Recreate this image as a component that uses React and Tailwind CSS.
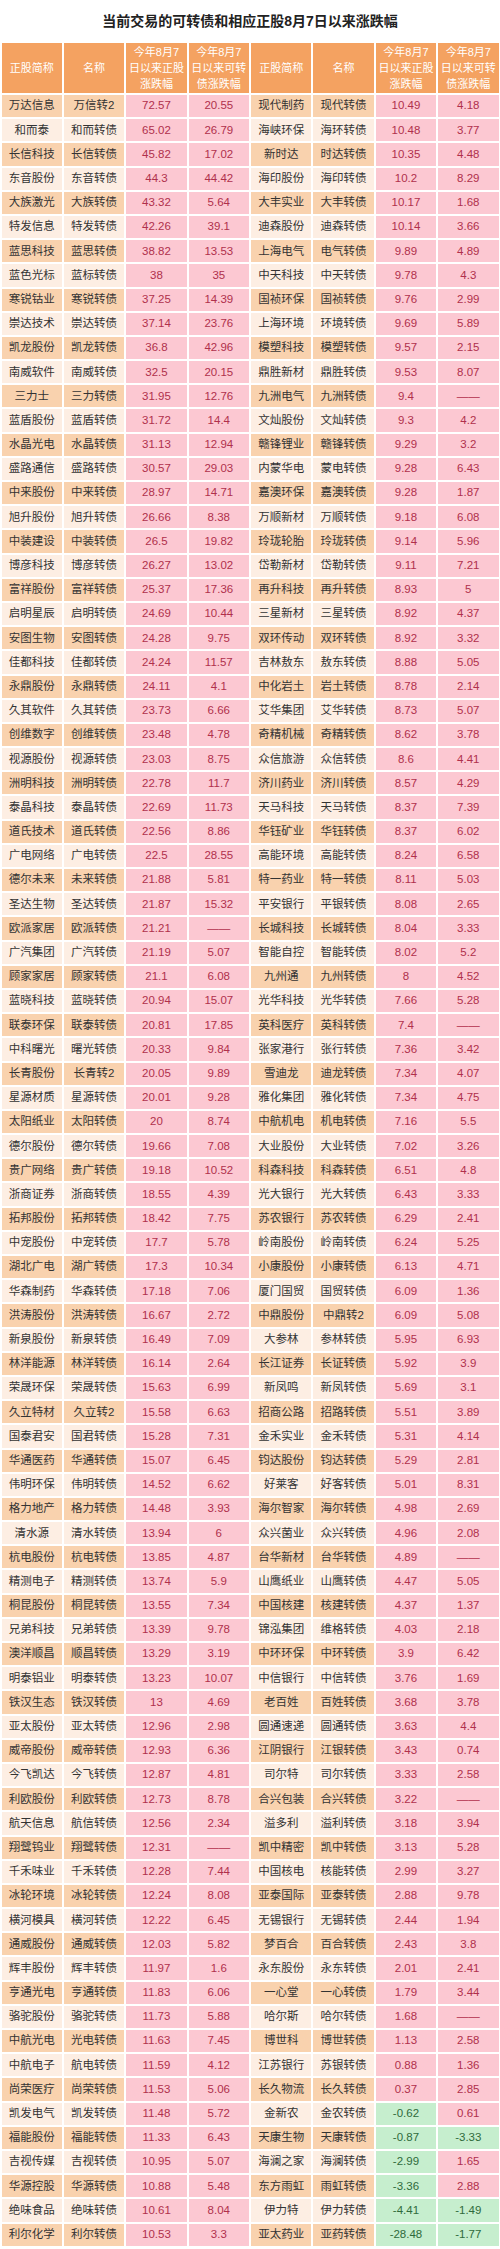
import React from 'react';

const rows = [
  ['万达信息', '万信转2', '72.57', '20.55', '现代制药', '现代转债', '10.49', '4.18'],
  ['和而泰', '和而转债', '65.02', '26.79', '海峡环保', '海环转债', '10.48', '3.77'],
  ['长信科技', '长信转债', '45.82', '17.02', '新时达', '时达转债', '10.35', '4.48'],
  ['东音股份', '东音转债', '44.3', '44.42', '海印股份', '海印转债', '10.2', '8.29'],
  ['大族激光', '大族转债', '43.32', '5.64', '大丰实业', '大丰转债', '10.17', '1.68'],
  ['特发信息', '特发转债', '42.26', '39.1', '迪森股份', '迪森转债', '10.14', '3.66'],
  ['蓝思科技', '蓝思转债', '38.82', '13.53', '上海电气', '电气转债', '9.89', '4.89'],
  ['蓝色光标', '蓝标转债', '38', '35', '中天科技', '中天转债', '9.78', '4.3'],
  ['寒锐钴业', '寒锐转债', '37.25', '14.39', '国祯环保', '国祯转债', '9.76', '2.99'],
  ['崇达技术', '崇达转债', '37.14', '23.76', '上海环境', '环境转债', '9.69', '5.89'],
  ['凯龙股份', '凯龙转债', '36.8', '42.96', '模塑科技', '模塑转债', '9.57', '2.15'],
  ['南威软件', '南威转债', '32.5', '20.15', '鼎胜新材', '鼎胜转债', '9.53', '8.07'],
  ['三力士', '三力转债', '31.95', '12.76', '九洲电气', '九洲转债', '9.4', '——'],
  ['蓝盾股份', '蓝盾转债', '31.72', '14.4', '文灿股份', '文灿转债', '9.3', '4.2'],
  ['水晶光电', '水晶转债', '31.13', '12.94', '赣锋锂业', '赣锋转债', '9.29', '3.2'],
  ['盛路通信', '盛路转债', '30.57', '29.03', '内蒙华电', '蒙电转债', '9.28', '6.43'],
  ['中来股份', '中来转债', '28.97', '14.71', '嘉澳环保', '嘉澳转债', '9.28', '1.87'],
  ['旭升股份', '旭升转债', '26.66', '8.38', '万顺新材', '万顺转债', '9.18', '6.08'],
  ['中装建设', '中装转债', '26.5', '19.82', '玲珑轮胎', '玲珑转债', '9.14', '5.96'],
  ['博彦科技', '博彦转债', '26.27', '13.02', '岱勒新材', '岱勒转债', '9.11', '7.21'],
  ['富祥股份', '富祥转债', '25.37', '17.36', '再升科技', '再升转债', '8.93', '5'],
  ['启明星辰', '启明转债', '24.69', '10.44', '三星新材', '三星转债', '8.92', '4.37'],
  ['安图生物', '安图转债', '24.28', '9.75', '双环传动', '双环转债', '8.92', '3.32'],
  ['佳都科技', '佳都转债', '24.24', '11.57', '吉林敖东', '敖东转债', '8.88', '5.05'],
  ['永鼎股份', '永鼎转债', '24.11', '4.1', '中化岩土', '岩土转债', '8.78', '2.14'],
  ['久其软件', '久其转债', '23.73', '6.66', '艾华集团', '艾华转债', '8.73', '5.07'],
  ['创维数字', '创维转债', '23.48', '4.78', '奇精机械', '奇精转债', '8.62', '3.78'],
  ['视源股份', '视源转债', '23.03', '8.75', '众信旅游', '众信转债', '8.6', '4.41'],
  ['洲明科技', '洲明转债', '22.78', '11.7', '济川药业', '济川转债', '8.57', '4.29'],
  ['泰晶科技', '泰晶转债', '22.69', '11.73', '天马科技', '天马转债', '8.37', '7.39'],
  ['道氏技术', '道氏转债', '22.56', '8.86', '华钰矿业', '华钰转债', '8.37', '6.02'],
  ['广电网络', '广电转债', '22.5', '28.55', '高能环境', '高能转债', '8.24', '6.58'],
  ['德尔未来', '未来转债', '21.88', '5.81', '特一药业', '特一转债', '8.11', '5.03'],
  ['圣达生物', '圣达转债', '21.87', '15.32', '平安银行', '平银转债', '8.08', '2.65'],
  ['欧派家居', '欧派转债', '21.21', '——', '长城科技', '长城转债', '8.04', '3.33'],
  ['广汽集团', '广汽转债', '21.19', '5.07', '智能自控', '智能转债', '8.02', '5.2'],
  ['顾家家居', '顾家转债', '21.1', '6.08', '九州通', '九州转债', '8', '4.52'],
  ['蓝晓科技', '蓝晓转债', '20.94', '15.07', '光华科技', '光华转债', '7.66', '5.28'],
  ['联泰环保', '联泰转债', '20.81', '17.85', '英科医疗', '英科转债', '7.4', '——'],
  ['中科曙光', '曙光转债', '20.33', '9.84', '张家港行', '张行转债', '7.36', '3.42'],
  ['长青股份', '长青转2', '20.05', '9.89', '雪迪龙', '迪龙转债', '7.34', '4.07'],
  ['星源材质', '星源转债', '20.01', '9.28', '雅化集团', '雅化转债', '7.34', '4.75'],
  ['太阳纸业', '太阳转债', '20', '8.74', '中航机电', '机电转债', '7.16', '5.5'],
  ['德尔股份', '德尔转债', '19.66', '7.08', '大业股份', '大业转债', '7.02', '3.26'],
  ['贵广网络', '贵广转债', '19.18', '10.52', '科森科技', '科森转债', '6.51', '4.8'],
  ['浙商证券', '浙商转债', '18.55', '4.39', '光大银行', '光大转债', '6.43', '3.33'],
  ['拓邦股份', '拓邦转债', '18.42', '7.75', '苏农银行', '苏农转债', '6.29', '2.41'],
  ['中宠股份', '中宠转债', '17.7', '5.78', '岭南股份', '岭南转债', '6.24', '5.25'],
  ['湖北广电', '湖广转债', '17.3', '10.34', '小康股份', '小康转债', '6.13', '4.71'],
  ['华森制药', '华森转债', '17.18', '7.06', '厦门国贸', '国贸转债', '6.09', '1.36'],
  ['洪涛股份', '洪涛转债', '16.67', '2.72', '中鼎股份', '中鼎转2', '6.09', '5.08'],
  ['新泉股份', '新泉转债', '16.49', '7.09', '大参林', '参林转债', '5.95', '6.93'],
  ['林洋能源', '林洋转债', '16.14', '2.64', '长江证券', '长证转债', '5.92', '3.9'],
  ['荣晟环保', '荣晟转债', '15.63', '6.99', '新凤鸣', '新凤转债', '5.69', '3.1'],
  ['久立特材', '久立转2', '15.58', '6.63', '招商公路', '招路转债', '5.51', '3.89'],
  ['国泰君安', '国君转债', '15.28', '7.31', '金禾实业', '金禾转债', '5.31', '4.14'],
  ['华通医药', '华通转债', '15.07', '6.45', '钧达股份', '钧达转债', '5.29', '2.81'],
  ['伟明环保', '伟明转债', '14.52', '6.62', '好莱客', '好客转债', '5.01', '8.31'],
  ['格力地产', '格力转债', '14.48', '3.93', '海尔智家', '海尔转债', '4.98', '2.69'],
  ['清水源', '清水转债', '13.94', '6', '众兴菌业', '众兴转债', '4.96', '2.08'],
  ['杭电股份', '杭电转债', '13.85', '4.87', '台华新材', '台华转债', '4.89', '——'],
  ['精测电子', '精测转债', '13.74', '5.9', '山鹰纸业', '山鹰转债', '4.47', '5.05'],
  ['桐昆股份', '桐昆转债', '13.55', '7.34', '中国核建', '核建转债', '4.37', '1.37'],
  ['兄弟科技', '兄弟转债', '13.39', '9.78', '锦泓集团', '维格转债', '4.03', '2.18'],
  ['澳洋顺昌', '顺昌转债', '13.29', '3.19', '中环环保', '中环转债', '3.9', '6.42'],
  ['明泰铝业', '明泰转债', '13.23', '10.07', '中信银行', '中信转债', '3.76', '1.69'],
  ['铁汉生态', '铁汉转债', '13', '4.69', '老百姓', '百姓转债', '3.68', '3.78'],
  ['亚太股份', '亚太转债', '12.96', '2.98', '圆通速递', '圆通转债', '3.63', '4.4'],
  ['威帝股份', '威帝转债', '12.93', '6.36', '江阴银行', '江银转债', '3.43', '0.74'],
  ['今飞凯达', '今飞转债', '12.87', '4.81', '司尔特', '司尔转债', '3.33', '2.58'],
  ['利欧股份', '利欧转债', '12.73', '8.78', '合兴包装', '合兴转债', '3.22', '——'],
  ['航天信息', '航信转债', '12.56', '2.34', '溢多利', '溢利转债', '3.18', '3.94'],
  ['翔鹭钨业', '翔鹭转债', '12.31', '——', '凯中精密', '凯中转债', '3.13', '5.28'],
  ['千禾味业', '千禾转债', '12.28', '7.44', '中国核电', '核能转债', '2.99', '3.27'],
  ['冰轮环境', '冰轮转债', '12.24', '8.08', '亚泰国际', '亚泰转债', '2.88', '9.78'],
  ['横河模具', '横河转债', '12.22', '6.45', '无锡银行', '无锡转债', '2.44', '1.94'],
  ['通威股份', '通威转债', '12.03', '5.82', '梦百合', '百合转债', '2.43', '3.8'],
  ['辉丰股份', '辉丰转债', '11.97', '1.6', '永东股份', '永东转债', '2.01', '2.41'],
  ['亨通光电', '亨通转债', '11.83', '6.06', '一心堂', '一心转债', '1.79', '3.44'],
  ['骆驼股份', '骆驼转债', '11.73', '5.88', '哈尔斯', '哈尔转债', '1.68', '——'],
  ['中航光电', '光电转债', '11.63', '7.45', '博世科', '博世转债', '1.13', '2.58'],
  ['中航电子', '航电转债', '11.59', '4.12', '江苏银行', '苏银转债', '0.88', '1.36'],
  ['尚荣医疗', '尚荣转债', '11.53', '5.06', '长久物流', '长久转债', '0.37', '2.85'],
  ['凯发电气', '凯发转债', '11.48', '5.72', '金新农', '金农转债', '-0.62', '0.61'],
  ['福能股份', '福能转债', '11.33', '6.43', '天康生物', '天康转债', '-0.87', '-3.33'],
  ['吉视传媒', '吉视转债', '10.95', '5.07', '海澜之家', '海澜转债', '-2.99', '1.65'],
  ['华源控股', '华源转债', '10.88', '5.48', '东方雨虹', '雨虹转债', '-3.36', '2.88'],
  ['绝味食品', '绝味转债', '10.61', '8.04', '伊力特', '伊力转债', '-4.41', '-1.49'],
  ['利尔化学', '利尔转债', '10.53', '3.3', '亚太药业', '亚药转债', '-28.48', '-1.77'],
];

const headers = [
  ['正股简称'],
  ['名称'],
  ['今年8月7', '日以来正股', '涨跌幅'],
  ['今年8月7', '日以来可转', '债涨跌幅'],
  ['正股简称'],
  ['名称'],
  ['今年8月7', '日以来正股', '涨跌幅'],
  ['今年8月7', '日以来可转', '债涨跌幅'],
];

function NameCell({ text, odd }) {
  return (
    <div
      className={`flex items-center justify-center text-[11.5px] text-[#333333] ${
        odd ? 'bg-[#f9d2ae]' : 'bg-[#fdeee3]'
      }`}
    >
      {text}
    </div>
  );
}

function NumCell({ text }) {
  const neg = text.startsWith('-');
  return (
    <div
      className={`flex items-center justify-center text-[11.5px] ${
        neg ? 'bg-[#c6eece] text-[#2f6b3c]' : 'bg-[#fcc8d2] text-[#b0304c]'
      }`}
    >
      {text}
    </div>
  );
}

export default function App() {
  return (
    <div
      className="w-[500px] bg-white"
      style={{ fontFamily: '"Liberation Sans", "Noto Sans CJK SC", sans-serif' }}
    >
      <div className="h-[43px] flex items-center justify-center text-[14px] font-bold text-[#222222]">
        当前交易的可转债和相应正股8月7日以来涨跌幅
      </div>
      <div className="px-[1.5px]">
        <div className="grid grid-cols-8 gap-[2px] h-[50px] mb-[2px]">
          {headers.map((lines, i) => (
            <div
              key={i}
              className="bg-[#f4a261] text-white text-[11px] leading-[16px] flex flex-col items-center justify-center"
            >
              {lines.map((l) => (
                <span key={l}>{l}</span>
              ))}
            </div>
          ))}
        </div>
        {rows.map((r, i) => {
          const odd = i % 2 === 0;
          return (
            <div key={r[0]} className="grid grid-cols-8 gap-[2px] h-[22.2px] mb-[2px]">
              <NameCell text={r[0]} odd={odd} />
              <NameCell text={r[1]} odd={odd} />
              <NumCell text={r[2]} />
              <NumCell text={r[3]} />
              <NameCell text={r[4]} odd={odd} />
              <NameCell text={r[5]} odd={odd} />
              <NumCell text={r[6]} />
              <NumCell text={r[7]} />
            </div>
          );
        })}
      </div>
    </div>
  );
}
